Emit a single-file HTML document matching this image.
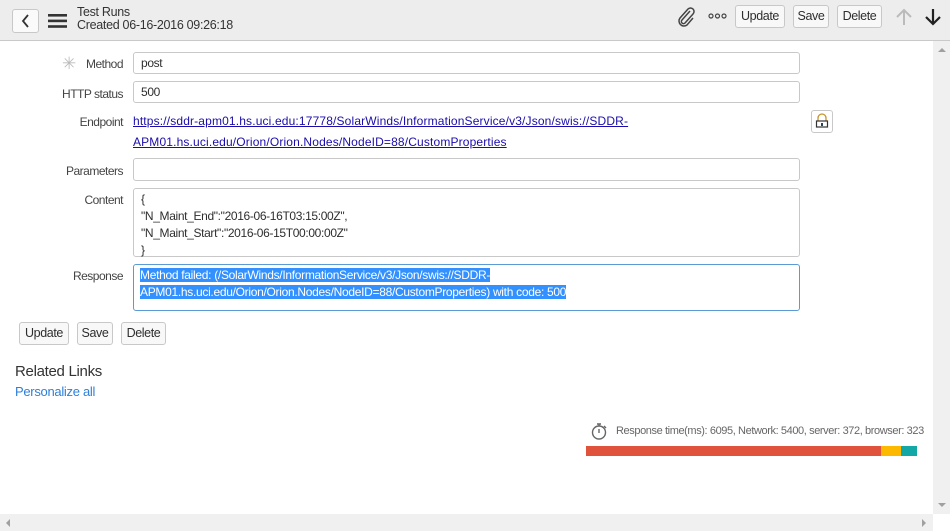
<!DOCTYPE html>
<html><head><meta charset="utf-8"><style>
*{box-sizing:border-box;margin:0;padding:0}
body{width:950px;height:531px;overflow:hidden;background:#fff;font-family:"Liberation Sans",sans-serif;font-size:12px;letter-spacing:0.15px;color:#2e2e2e;position:relative}
.abs{position:absolute;white-space:nowrap}
.hdr{position:absolute;left:0;top:0;width:950px;height:41px;background:#ededed;border-bottom:1px solid #c9c9c9}
.btn{position:absolute;border:1px solid #c8c8c8;border-radius:3px;background:#f8f8f8;font-size:12.5px;letter-spacing:-0.4px;color:#2e2e2e;text-align:center;line-height:20px;height:23px}
.lbl{position:absolute;right:827px;text-align:right;white-space:nowrap;color:#444;letter-spacing:-0.5px}
.inp{position:absolute;left:133px;width:667px;border:1px solid #c8c8c8;border-radius:3px;background:#fff;padding-left:7px;white-space:nowrap;letter-spacing:-0.35px}
a{color:#1a0dab;text-decoration:underline}
</style></head><body>
<div class="hdr"></div>
<div class="btn" style="left:12px;top:9px;width:27px;height:24px;background:#fafafa"><svg width="27" height="22" viewBox="0 0 27 22"><path d="M15 5l-5 6 5 6" fill="none" stroke="#333" stroke-width="1.8"/></svg></div>
<svg class="abs" style="left:48px;top:13px" width="20" height="16"><rect x="0" y="1" width="19" height="2.6" fill="#333"/><rect x="0" y="6.6" width="19" height="2.6" fill="#333"/><rect x="0" y="12.2" width="19" height="2.6" fill="#333"/></svg>
<div class="abs" style="left:77px;top:5px;font-size:12.5px;letter-spacing:-0.3px;color:#333">Test Runs</div>
<div class="abs" style="left:77px;top:18px;font-size:12.5px;letter-spacing:-0.3px;color:#333">Created 06-16-2016 09:26:18</div>
<svg class="abs" style="left:674px;top:6px" width="22" height="22" viewBox="0 0 22 22"><path d="M16 5l-8 9a2 2 0 0 0 3 3l8-9a3.5 3.5 0 0 0-5-5l-8 9a5 5 0 0 0 7 7l6-7" fill="none" stroke="#444" stroke-width="1.5"/></svg>
<svg class="abs" style="left:708px;top:12px" width="20" height="8"><circle cx="3" cy="4" r="2" fill="none" stroke="#444" stroke-width="1.2"/><circle cx="9.5" cy="4" r="2" fill="none" stroke="#444" stroke-width="1.2"/><circle cx="16" cy="4" r="2" fill="none" stroke="#444" stroke-width="1.2"/></svg>
<div class="btn" style="left:735px;top:5px;width:50px">Update</div>
<div class="btn" style="left:793px;top:5px;width:36px">Save</div>
<div class="btn" style="left:837px;top:5px;width:45px">Delete</div>
<svg class="abs" style="left:894px;top:7px" width="20" height="20"><path d="M10 18V3M3 10l7-7 7 7" fill="none" stroke="#bbb" stroke-width="2"/></svg>
<svg class="abs" style="left:923px;top:7px" width="20" height="20"><path d="M10 2v15M3 10l7 7 7-7" fill="none" stroke="#222" stroke-width="2.2"/></svg>

<div class="abs" style="left:62px;top:54px;font-size:17px;color:#bbb;letter-spacing:0">✳</div>
<div class="lbl" style="top:57px">Method</div>
<div class="inp" style="top:52px;height:22px;line-height:21px">post</div>
<div class="lbl" style="top:87px">HTTP status</div>
<div class="inp" style="top:81px;height:22px;line-height:21px">500</div>
<div class="lbl" style="top:115px">Endpoint</div>
<div class="abs" style="left:133px;top:111px;line-height:21px"><a>https://sddr-apm01.hs.uci.edu:17778/SolarWinds/InformationService/v3/Json/swis://SDDR-</a><br><a>APM01.hs.uci.edu/Orion/Orion.Nodes/NodeID=88/CustomProperties</a></div>
<div class="btn" style="left:811px;top:110px;width:22px;height:23px;background:#fff"><svg width="20" height="21" viewBox="0 0 20 21"><path d="M6 10V7a4 4 0 0 1 8 0v3" fill="none" stroke="#c8932c" stroke-width="1.3"/><rect x="4.5" y="10" width="11" height="6" fill="none" stroke="#333" stroke-width="1.2"/><rect x="9" y="12" width="2" height="3" fill="#246"/></svg></div>
<div class="lbl" style="top:164px">Parameters</div>
<div class="inp" style="top:158px;height:23px"></div>
<div class="lbl" style="top:193px">Content</div>
<div class="inp" style="top:188px;height:69px;line-height:17px;padding-top:2px">{<br>"N_Maint_End":"2016-06-16T03:15:00Z",<br>"N_Maint_Start":"2016-06-15T00:00:00Z"<br>}</div>
<div class="lbl" style="top:269px">Response</div>
<div class="inp" style="top:264px;height:47px;border-color:#5b9bd5;line-height:17px;padding-top:2px;padding-left:6px;color:#fff;letter-spacing:-0.3px"><span style="background:#3390ff">Method failed: (/SolarWinds/InformationService/v3/Json/swis://SDDR-</span><br><span style="background:#3390ff">APM01.hs.uci.edu/Orion/Orion.Nodes/NodeID=88/CustomProperties) with code: 500</span></div>

<div class="btn" style="left:19px;top:322px;width:50px">Update</div>
<div class="btn" style="left:77px;top:322px;width:36px">Save</div>
<div class="btn" style="left:121px;top:322px;width:45px">Delete</div>
<div class="abs" style="left:15px;top:363px;font-size:15px;color:#333;letter-spacing:-0.3px">Related Links</div>
<div class="abs" style="left:15px;top:384px;font-size:13px;color:#2e7fd9;letter-spacing:-0.3px">Personalize all</div>

<svg class="abs" style="left:590px;top:422px" width="18" height="19"><circle cx="9" cy="10.5" r="6.5" fill="none" stroke="#666" stroke-width="1.4"/><path d="M7 2h4M9 2v2M9 7v4M14 4l2 2" stroke="#666" stroke-width="1.4" fill="none"/></svg>
<div class="abs" style="left:616px;top:425px;font-size:11px;color:#666;letter-spacing:-0.4px">Response time(ms): 6095, Network: 5400, server: 372, browser: 323</div>
<div class="abs" style="left:586px;top:446px;width:295px;height:10px;background:#e1523d"></div>
<div class="abs" style="left:881px;top:446px;width:20px;height:10px;background:#fcb900"></div>
<div class="abs" style="left:901px;top:446px;width:16px;height:10px;background:#13a7a6"></div>

<div class="abs" style="left:933px;top:41px;width:17px;height:473px;background:#f0f0f0"></div>
<svg class="abs" style="left:937px;top:46px" width="10" height="8"><path d="M1 6h8L5 2z" fill="#a0a0a0"/></svg>
<svg class="abs" style="left:937px;top:501px" width="10" height="8"><path d="M1 2h8L5 6z" fill="#a0a0a0"/></svg>
<div class="abs" style="left:0;top:514px;width:933px;height:17px;background:#f0f0f0"></div>
<svg class="abs" style="left:920px;top:518px" width="8" height="10"><path d="M2 1v8l4-4z" fill="#a0a0a0"/></svg>
<svg class="abs" style="left:4px;top:518px" width="8" height="10"><path d="M6 1v8L2 5z" fill="#a0a0a0"/></svg>
</body></html>
